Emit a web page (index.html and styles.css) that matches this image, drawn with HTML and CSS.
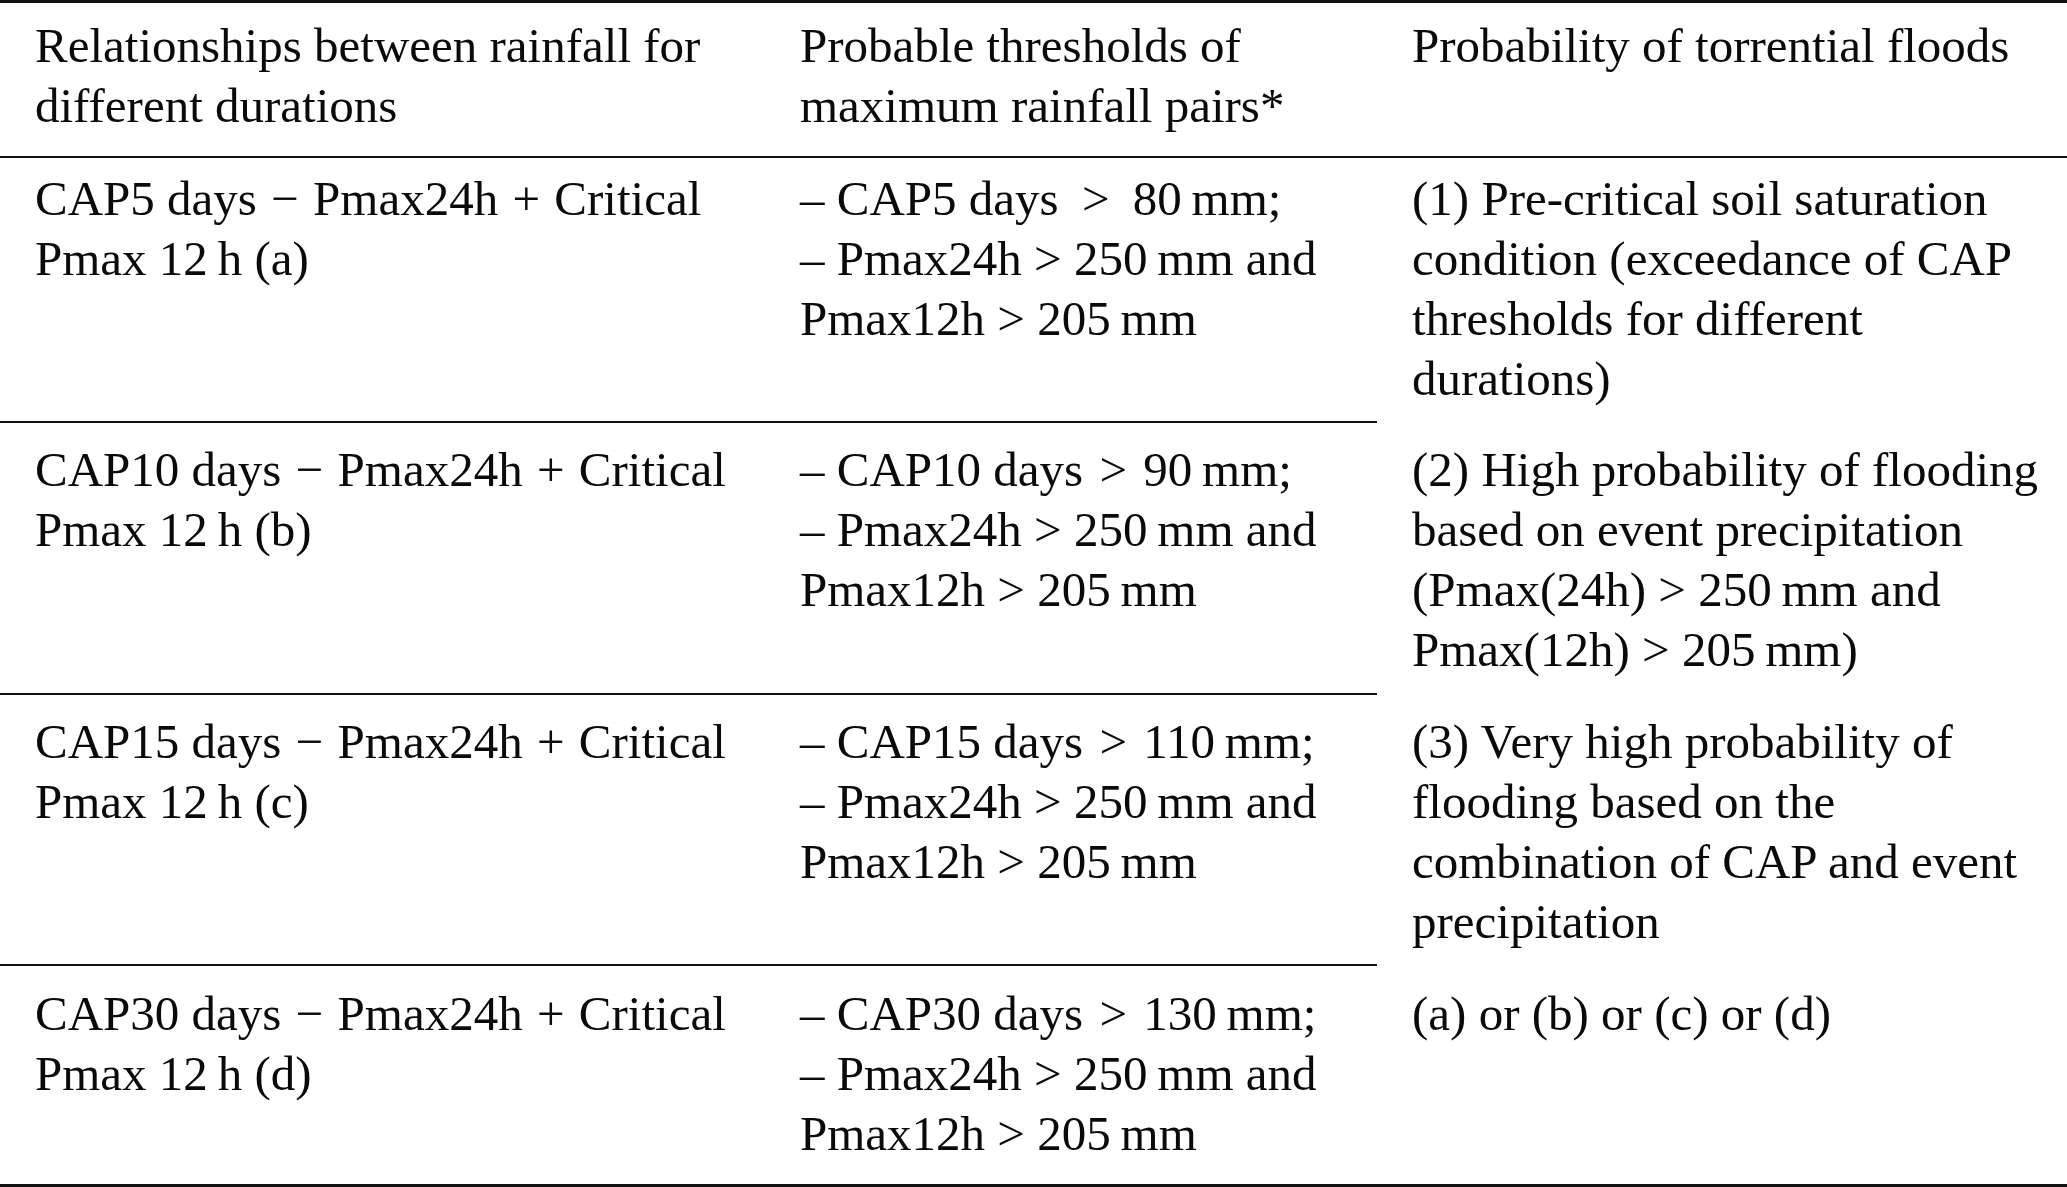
FILE: index.html
```html
<!DOCTYPE html>
<html lang="en">
<head>
<meta charset="utf-8">
<title>Rainfall thresholds</title>
<link rel="stylesheet" href="styles.css">
</head>
<body>
<table class="thresholds">
  <colgroup>
    <col class="c1">
    <col class="c2">
    <col class="c3">
  </colgroup>
  <thead>
    <tr class="head">
      <th>Relationships between rainfall for<br>different durations</th>
      <th>Probable thresholds of<br>maximum rainfall pairs*</th>
      <th>Probability of torrential floods</th>
    </tr>
  </thead>
  <tbody>
    <tr class="r1">
      <td class="ruled">CAP5 days <span class="op">−</span> Pmax24h <span class="op">+</span> Critical<br>Pmax 12&thinsp;h (a)</td>
      <td class="ruled">– CAP5 days <span class="rel wide">&gt;</span> 80&thinsp;mm;<br>– Pmax24h &gt; 250&thinsp;mm and<br>Pmax12h &gt; 205&thinsp;mm</td>
      <td>(1) Pre-critical soil saturation<br>condition (exceedance of CAP<br>thresholds for different<br>durations)</td>
    </tr>
    <tr class="r2">
      <td class="ruled">CAP10 days <span class="op">−</span> Pmax24h <span class="op">+</span> Critical<br>Pmax 12&thinsp;h (b)</td>
      <td class="ruled">– CAP10 days <span class="rel">&gt;</span> 90&thinsp;mm;<br>– Pmax24h &gt; 250&thinsp;mm and<br>Pmax12h &gt; 205&thinsp;mm</td>
      <td>(2) High probability of flooding<br>based on event precipitation<br>(Pmax(24h) &gt; 250&thinsp;mm and<br>Pmax(12h) &gt; 205&thinsp;mm)</td>
    </tr>
    <tr class="r3">
      <td class="ruled">CAP15 days <span class="op">−</span> Pmax24h <span class="op">+</span> Critical<br>Pmax 12&thinsp;h (c)</td>
      <td class="ruled">– CAP15 days <span class="rel">&gt;</span> 110&thinsp;mm;<br>– Pmax24h &gt; 250&thinsp;mm and<br>Pmax12h &gt; 205&thinsp;mm</td>
      <td>(3) Very high probability of<br>flooding based on the<br>combination of CAP and event<br>precipitation</td>
    </tr>
    <tr class="r4">
      <td>CAP30 days <span class="op">−</span> Pmax24h <span class="op">+</span> Critical<br>Pmax 12&thinsp;h (d)</td>
      <td>– CAP30 days <span class="rel">&gt;</span> 130&thinsp;mm;<br>– Pmax24h &gt; 250&thinsp;mm and<br>Pmax12h &gt; 205&thinsp;mm</td>
      <td>(a) or (b) or (c) or (d)</td>
    </tr>
  </tbody>
</table>
</body>
</html>
```
FILE: styles.css
```css
html, body {
  margin: 0;
  padding: 0;
  background: #fff;
}

.thresholds {
  width: 2067px;
  table-layout: fixed;
  border-collapse: separate;
  border-spacing: 0;
  font-family: "Liberation Serif", "Times New Roman", serif;
  font-size: 49px;
  line-height: 60px;
  color: #0a0a0a;
}

.c1 { width: 765px; }
.c2 { width: 612px; }
.c3 { width: 690px; }

.thresholds th,
.thresholds td {
  text-align: left;
  font-weight: normal;
  vertical-align: top;
  white-space: nowrap;
  padding: 0 0 0 35px;
}

.op {
  margin: 0 2px;
}

.rel {
  margin: 0 4px;
}

.rel.wide {
  margin: 0 11px;
}

.head th {
  border-top: 3px solid #111;
  border-bottom: 2px solid #111;
  padding-top: 13px;
  padding-bottom: 20px;
}

.r1 td { padding-top: 11px; padding-bottom: 14px; }
.r2 td { padding-top: 17px; padding-bottom: 15px; }
.r3 td { padding-top: 17px; padding-bottom: 14px; }
.r4 td {
  padding-top: 18px;
  padding-bottom: 20px;
  border-bottom: 3px solid #111;
}

.thresholds td.ruled {
  border-bottom: 2px solid #111;
}
```
